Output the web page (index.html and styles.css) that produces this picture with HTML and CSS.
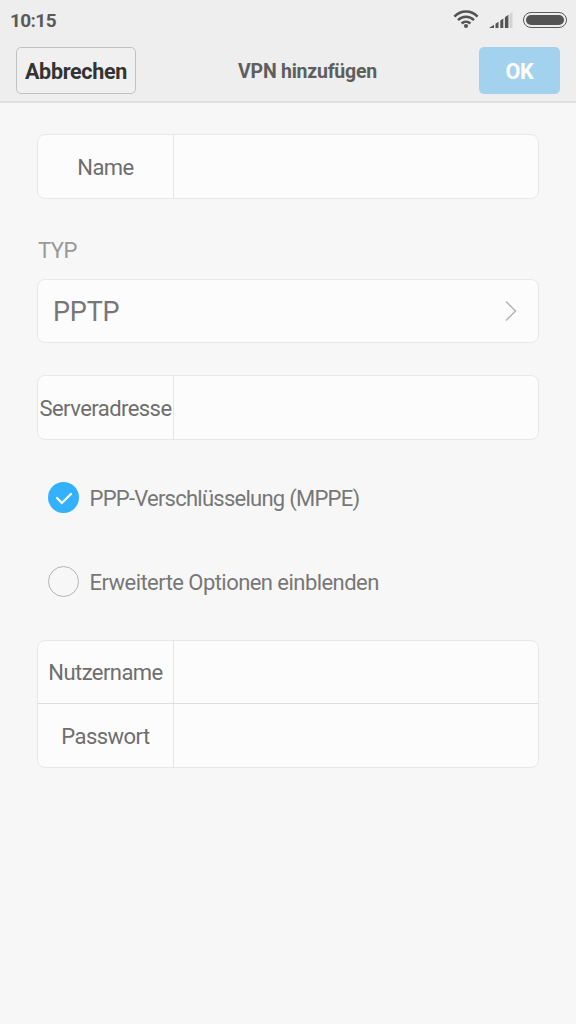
FILE: index.html
```html
<!DOCTYPE html>
<html lang="de">
<head>
	<meta charset="UTF-8">
	<meta name="viewport" content="width=device-width, initial-scale=1.0">
	<title>VPN hinzufügen</title>
	<link rel="stylesheet" href="styles.css">
</head>
<body>
	<header class="top">
		<div class="status-bar">
			<span class="time">10:15</span>
			<div class="status-icons">
				<svg class="wifi" width="26" height="19" viewBox="0 0 26 19">
					<g fill="none" stroke="#545454" stroke-width="2.5">
						<path d="M1.4 6.600C8 -.2 18 -.2 24.600 6.600"/>
						<path d="M5 10.200c4.500-4.500 11.500-4.500 16 0"/>
						<path d="M8.600 13.500c2.500-2.500 6.300-2.500 8.800 0"/>
					</g>
					<circle cx="13" cy="16" r="2.100" fill="#545454"/>
				</svg>
				<svg class="signal" width="25" height="16" viewBox="0 0 25 16">
					<path d="M0 16l5-3.200V16zM6.500 11.800l3-2V16h-3zM11.300 8.400l3-2V16h-3zM15.900 5.300l3.500-2.500V16h-3.500z" fill="#545454"/>
					<path d="M20.500 2L23.500 0v16h-3z" fill="#d3d3d3"/>
				</svg>
				<div class="battery"></div>
			</div>
		</div>
		<div class="title-bar">
			<button class="btn cancel">Abbrechen</button>
			<h1>VPN hinzufügen</h1>
			<button class="btn ok">OK</button>
		</div>
	</header>
	<main>
		<div class="card">
			<label class="row"><span class="label">Name</span><input type="text"></label>
		</div>
		<h2>TYP</h2>
		<div class="card type">
			<span class="value">PPTP</span>
			<svg width="14" height="22" viewBox="0 0 14 22">
				<path d="M2 1.500l9.500 9.500L2 20.500" fill="none" stroke="#b4b4b4" stroke-width="1.500"/>
			</svg>
		</div>
		<div class="card server">
			<label class="row"><span class="label">Serveradresse</span><input type="text"></label>
		</div>
		<div class="option mppe">
			<span class="check checked">
				<svg width="31" height="31" viewBox="0 0 31 31">
					<path d="M9 16l4.800 5L23 12" fill="none" stroke="#fff" stroke-width="2.200" stroke-linecap="round"/>
				</svg>
			</span>
			<span>PPP-Verschlüsselung (MPPE)</span>
		</div>
		<div class="option">
			<span class="check"></span>
			<span>Erweiterte Optionen einblenden</span>
		</div>
		<div class="card login">
			<label class="row"><span class="label">Nutzername</span><input type="text"></label>
			<label class="row"><span class="label">Passwort</span><input type="password"></label>
		</div>
	</main>
</body>
</html>
```
FILE: styles.css
```css
*{box-sizing: border-box;}
body{
	margin: 0; min-height: 1024px;
	background: #f7f7f7; color: #6e6e6e;
	font-family: Roboto, sans-serif; font-size: 22px; letter-spacing: -0.55px;
}
/* header */
.top{
	height: 103px;
	background: #eee;
	border-bottom: 2px solid #dfdfdf;
}
.status-bar{
	display: flex; justify-content: space-between; align-items: center;
	height: 40px; padding: 0 9px 0 10px;
}
.time{font-size: 19px; font-weight: bold; letter-spacing: -0.6px; color: #5a5a5a;}
.status-icons{display: flex; align-items: center;}
.wifi{margin-top: -1px;}
.signal{margin: 0 9px 0 10px;}
.battery{
	width: 44px; height: 16px; margin-top: -1px; padding: 2px;
	border: 1.5px solid #5c5c5c; border-radius: 8px;
	background: #545454 content-box;
}
.title-bar{
	display: flex; justify-content: space-between; align-items: center;
	padding: 7px 16px 0;
}
.title-bar h1{margin: 0; padding-top: 1px; font-size: 19.5px; letter-spacing: -0.25px; color: #5e5e5e;}
.btn{
	height: 47px; padding: 1px 0 0;
	border: 0; border-radius: 5px;
	font: bold 21.5px Roboto, sans-serif; letter-spacing: -0.3px;
}
.cancel{
	width: 120px;
	border: 1px solid #c2c2c2;
	background: #f0f0f0; color: #333;
}
.ok{width: 81px; background: #a3d2ee; color: #fff;}
/* form */
main{padding: 31px 37px 0;}
.card{
	overflow: hidden;
	border: 1px solid #e8e8e8; border-radius: 8px;
	background: #fcfcfc;
}
.row{display: flex; height: 63px;}
.label{
	display: flex; align-items: center; justify-content: center;
	width: 136px; flex: none; padding-top: 1px;
	border-right: 1px solid #e6e6e6;
}
.row input{
	flex: 1; min-width: 0; padding: 0 12px;
	border: 0; outline: 0; background: none; font: inherit;
}
h2{
	margin: 40px 0 16px 1px;
	font-size: 22px; font-weight: normal; line-height: 24px; color: #999;
}
.type{
	display: flex; justify-content: space-between; align-items: center;
	height: 64px; padding: 0 20px 0 15px;
	font-size: 27px; letter-spacing: -0.2px; color: #777;
}
.value{padding-top: 2px;}
.server{margin: 32px 0 16px;}
.option{
	display: flex; align-items: center; gap: 10.5px;
	height: 84px; padding-left: 11px;
	color: #777;
}
.mppe{letter-spacing: -0.75px;}
.check{
	width: 31px; height: 31px; margin-bottom: 1px;
	border: 1px solid #b5b5b5; border-radius: 50%;
}
.checked{display: flex; border: 0; background: #33b1ff;}
.login{margin-top: 16px;}
.login .row:first-child{height: 62px;}
.login .row + .row{height: 64px; border-top: 1px solid #dedede;}
```
